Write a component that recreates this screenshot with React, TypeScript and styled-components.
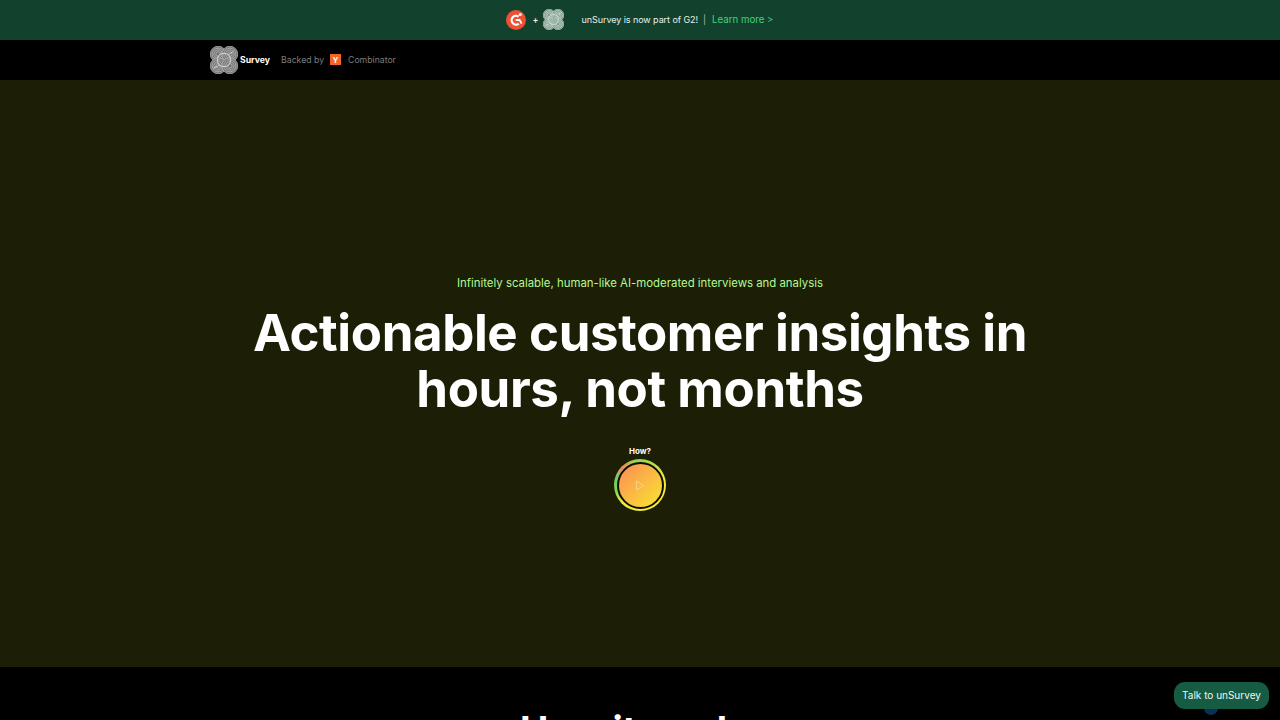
import styled, { createGlobalStyle } from 'styled-components';

const GlobalStyle = createGlobalStyle`
  html, body {
    margin: 0;
    height: 720px;
    overflow: hidden;
    background: #000;
    font-family: 'Inter', 'Liberation Sans', sans-serif;
  }
  * { box-sizing: border-box; }
`;

const Banner = styled.div`
  height: 40px;
  background: #12422e;
  display: flex;
  align-items: center;
  justify-content: center;
  font-size: 9px;
  color: #e8f0ea;
  padding-bottom: 1px;
`;

const Plus = styled.span`
  margin: 0 4px 0 6px;
  font-weight: 600;
`;

const BannerText = styled.span`
  margin-left: 18px;
  letter-spacing: -0.07px;
`;

const Divider = styled.span`
  margin: 0 6px 0 5px;
  color: #a9c0b2;
`;

const LearnMore = styled.a`
  color: #3fd37c;
  font-size: 9.7px;
`;

const Nav = styled.nav`
  height: 40px;
  background: #000;
  display: flex;
  align-items: center;
  padding: 0 0 1px 210px;
`;

const Brand = styled.span`
  font-size: 8.7px;
  font-weight: 700;
  color: #fff;
  margin: 0 0 0 2px;
`;

const Backed = styled.span`
  display: flex;
  align-items: center;
  font-size: 8.7px;
  color: #7d7d7d;
  margin-left: 11px;
`;

const YBadge = styled.span`
  width: 11px;
  height: 11px;
  margin: 0 7px 0 6px;
  background: #f26625;
  color: #fff;
  font-size: 8px;
  font-weight: 700;
  display: flex;
  align-items: center;
  justify-content: center;
`;

const Hero = styled.section`
  height: 587px;
  background: #1c1e06;
  display: flex;
  flex-direction: column;
  align-items: center;
  padding-top: 195px;
`;

const Tagline = styled.p`
  margin: 0;
  font-size: 11.4px;
  line-height: 16px;
  color: #b4fa8f;
`;

const Headline = styled.h1`
  margin: 14px 0 0;
  width: 820px;
  font-size: 51px;
  line-height: 56px;
  font-weight: 700;
  letter-spacing: -0.4px;
  text-align: center;
  color: #fff;
`;

const HowLabel = styled.span`
  margin-top: 28px;
  font-size: 8px;
  line-height: 12px;
  font-weight: 700;
  color: #fff;
`;

const PlayRing = styled.button`
  margin-top: 2px;
  width: 52px;
  height: 52px;
  padding: 2.5px;
  border: 0;
  border-radius: 50%;
  background: conic-gradient(#8fd94f 0deg, #f7ec3a 80deg, #f7ec3a 225deg, #7fd652 255deg, #6fd05c 285deg, #f08a5d 315deg, #8fd94f 350deg);
  display: flex;
`;

const PlayDisc = styled.span`
  flex: 1;
  border-radius: 50%;
  border: 2px solid #0c0d03;
  background: linear-gradient(135deg, #fd8b56, #f8e72f);
  display: flex;
  align-items: center;
  justify-content: center;
`;

const HowSection = styled.section`
  background: #000;
  padding-top: 35px;
`;

const SectionTitle = styled.h2`
  margin: 0;
  font-size: 38px;
  line-height: 56px;
  font-weight: 700;
  text-align: center;
  color: #fff;
`;

const ChatButton = styled.button`
  position: fixed;
  right: 11px;
  bottom: 11px;
  height: 27px;
  width: 95px;
  padding: 0 0 1px;
  border: 0;
  border-radius: 11px;
  background: #165c43;
  color: #f0f5f2;
  font-family: inherit;
  font-size: 10px;
`;

const ChatGlow = styled.span`
  position: fixed;
  left: 1204px;
  bottom: 5px;
  width: 14px;
  height: 14px;
  border-radius: 50%;
  background: #0d2f57;
`;

function G2Logo() {
  return (
    <svg width="20" height="20" viewBox="0 0 20 20">
      <circle cx="10" cy="10" r="10" fill="#ef4f33" />
      <path d="M12.6 6.6A4.4 4.4 0 1 0 12.8 13.6" fill="none" stroke="#fff" strokeWidth="2.2" />
      <path d="M9.6 10h4l2 3.6" fill="none" stroke="#fff" strokeWidth="1.8" />
      <circle cx="14.3" cy="4.6" r="1.5" fill="#fff" />
    </svg>
  );
}

function KnotLogo({ size, color, bg }: { size: number; color: string; bg: string }) {
  const lobes = [
    [7, 7],
    [17, 7],
    [7, 17],
    [17, 17],
  ];
  return (
    <svg width={size} height={size} viewBox="0 0 24 24">
      {lobes.map(([cx, cy]) => (
        <g key={`${cx}-${cy}`} fill="none" stroke={color}>
          <circle cx={cx} cy={cy} r="6.8" fill={bg} strokeWidth="0.6" />
          <circle cx={cx} cy={cy} r="5.2" strokeWidth="0.6" />
          <circle cx={cx} cy={cy} r="3.6" strokeWidth="0.6" />
          <circle cx={cx} cy={cy} r="2" strokeWidth="0.6" />
        </g>
      ))}
      <path
        d="M8 7.5c2-1.5 6-1.5 8 0c2 2 2 7 0 9c-2 1.5-6 1.5-8 0c-2-2-2-7 0-9zM3 19l5-2.5M16 7.5l4-3"
        fill="none"
        stroke="#f4f4f4"
        strokeWidth="0.6"
      />
    </svg>
  );
}

export default function App() {
  return (
    <>
      <GlobalStyle />
      <Banner>
        <G2Logo />
        <Plus>+</Plus>
        <KnotLogo size={21} color="#d6e4dc" bg="#7f9c8e" />
        <BannerText>unSurvey is now part of G2!</BannerText>
        <Divider>|</Divider>
        <LearnMore>Learn more &gt;</LearnMore>
      </Banner>
      <Nav>
        <KnotLogo size={28} color="#bdbdbd" bg="#757575" />
        <Brand>Survey</Brand>
        <Backed>
          Backed by
          <YBadge>Y</YBadge>
          Combinator
        </Backed>
      </Nav>
      <Hero>
        <Tagline>Infinitely scalable, human-like AI-moderated interviews and analysis</Tagline>
        <Headline>Actionable customer insights in hours, not months</Headline>
        <HowLabel>How?</HowLabel>
        <PlayRing>
          <PlayDisc>
            <svg width="10" height="11" viewBox="0 0 10 11">
              <path d="M1.5 1l7 4.5-7 4.5z" fill="none" stroke="#fbd9a0" strokeWidth="0.8" />
            </svg>
          </PlayDisc>
        </PlayRing>
      </Hero>
      <HowSection>
        <SectionTitle>How it works</SectionTitle>
      </HowSection>
      <ChatGlow />
      <ChatButton>Talk to unSurvey</ChatButton>
    </>
  );
}
